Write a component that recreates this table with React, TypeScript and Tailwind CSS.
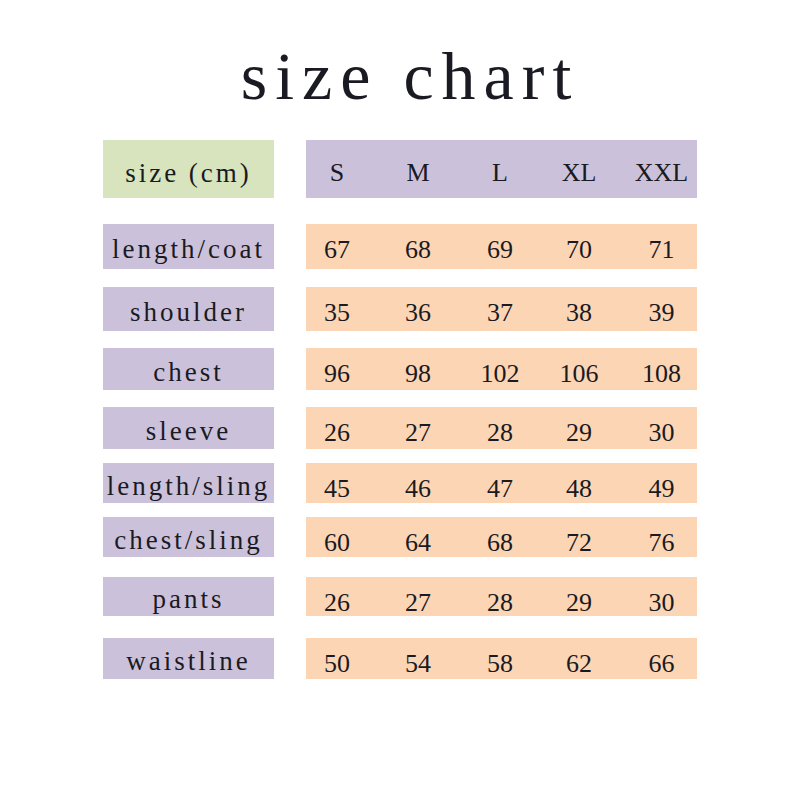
const rows = [
  { label: "length/coat", values: ["67", "68", "69", "70", "71"], box: "mt-[26px] h-[45px]" },
  { label: "shoulder", values: ["35", "36", "37", "38", "39"], box: "mt-[18px] h-[44px]" },
  { label: "chest", values: ["96", "98", "102", "106", "108"], box: "mt-[17px] h-[42px]" },
  { label: "sleeve", values: ["26", "27", "28", "29", "30"], box: "mt-[17px] h-[42px]" },
  { label: "length/sling", values: ["45", "46", "47", "48", "49"], box: "mt-[14px] h-[40px]" },
  { label: "chest/sling", values: ["60", "64", "68", "72", "76"], box: "mt-[14px] h-[40px]" },
  { label: "pants", values: ["26", "27", "28", "29", "30"], box: "mt-[20px] h-[39px]" },
  { label: "waistline", values: ["50", "54", "58", "62", "66"], box: "mt-[22px] h-[41px]" },
];

const sizes = ["S", "M", "L", "XL", "XXL"];

function Cells({ items }: { items: string[] }) {
  return (
    <div className="grid h-full grid-cols-[62px_100px_64px_94px_71px] items-center pt-[6px]">
      {items.map((v, i) => (
        <span key={i} className="text-center">
          {v}
        </span>
      ))}
    </div>
  );
}

export default function App() {
  return (
    <div className="h-[800px] w-[800px] bg-white text-[#1a1a22] font-['Liberation_Serif',serif]">
      <h1 className="pt-[42px] pl-[20px] text-center text-[68px] leading-none tracking-[8px]">
        size chart
      </h1>

      <div className="mt-[30px] ml-[103px] flex flex-col">
        <div className="flex h-[58px] gap-[32px]">
          <div className="flex w-[171px] items-center justify-center bg-[#d7e4bd] pt-[8px] text-[27px] tracking-[3px] whitespace-nowrap">
            size (cm)
          </div>
          <div className="w-[391px] bg-[#ccc1da] text-[26px]">
            <Cells items={sizes} />
          </div>
        </div>

        {rows.map((r) => (
          <div key={r.label} className={`flex gap-[32px] ${r.box}`}>
            <div className="flex w-[171px] items-center justify-center bg-[#ccc1da] pt-[6px] text-[27px] tracking-[3px] whitespace-nowrap">
              {r.label}
            </div>
            <div className="w-[391px] bg-[#fcd5b5] text-[26px]">
              <Cells items={r.values} />
            </div>
          </div>
        ))}
      </div>
    </div>
  );
}
